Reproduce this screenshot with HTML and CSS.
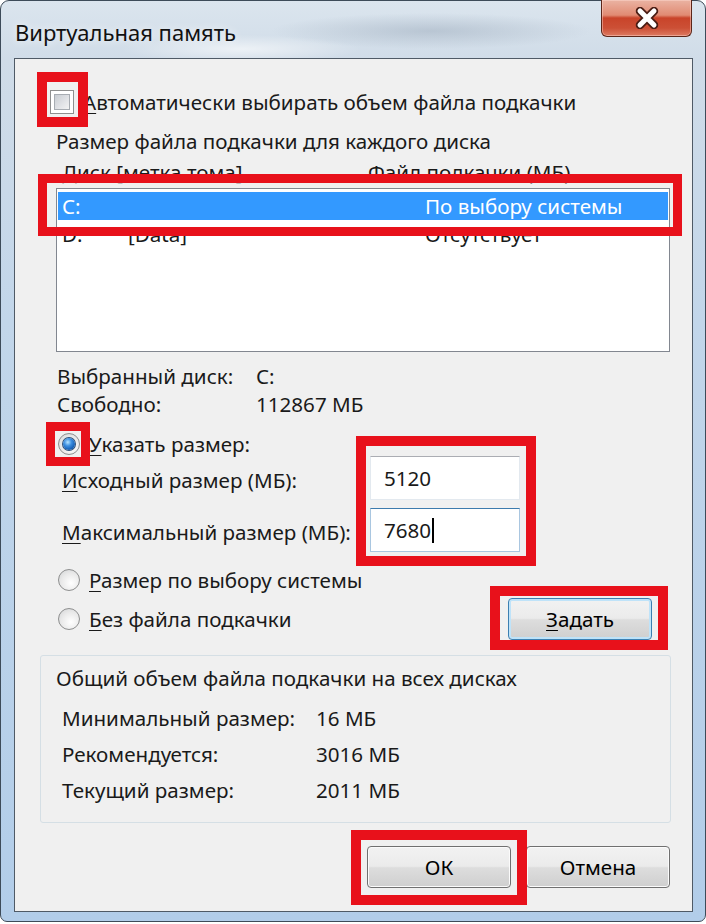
FILE: index.html
```html
<!DOCTYPE html>
<html lang="ru">
<head>
  <meta charset="UTF-8" />
  <title>Виртуальная память</title>
  <link rel="stylesheet" href="styles.css">
</head>
<body>
  <div class="window">
    <div class="titlebar">
      <span class="title">Виртуальная память</span>
      <button class="close-btn" aria-label="Закрыть">
        <svg width="28" height="22" viewBox="0 0 28 22">
          <path d="M7 4 L21 18 M21 4 L7 18" stroke="#4a1d14" stroke-width="8.5" stroke-linecap="round"/>
          <path d="M7 4 L21 18 M21 4 L7 18" stroke="#fff" stroke-width="5" stroke-linecap="round"/>
        </svg>
      </button>
    </div>

    <div class="client">
      <!-- auto checkbox -->
      <label class="auto-row">
        <span class="checkbox"></span>
        <span><u>А</u>втоматически выбирать объем файла подкачки</span>
      </label>

      <div class="section-caption">Размер файла подкачки для каждого диска</div>
      <div class="list-head">
        <span>Диск [метка тома]</span>
        <span>Файл подкачки (МБ)</span>
      </div>
      <div class="listbox">
        <div class="list-row selected"><span>C:</span><span></span><span>По выбору системы</span></div>
        <div class="list-row"><span>D:</span><span>[Data]</span><span>Отсутствует</span></div>
      </div>

      <div class="info-row first"><span>Выбранный диск:</span><span>C:</span></div>
      <div class="info-row"><span>Свободно:</span><span>112867 МБ</span></div>

      <label class="radio-row custom">
        <span class="radio checked"></span>
        <span><u>У</u>казать размер:</span>
      </label>
      <div class="size-row">
        <span class="size-label"><u>И</u>сходный размер (МБ):</span>
        <div class="field">5120</div>
      </div>
      <div class="size-row second">
        <span class="size-label"><u>М</u>аксимальный размер (МБ):</span>
        <div class="field focused">7680<span class="caret"></span></div>
      </div>

      <label class="radio-row system">
        <span class="radio"></span>
        <span><u>Р</u>азмер по выбору системы</span>
      </label>
      <div class="none-row">
        <label class="radio-row">
          <span class="radio"></span>
          <span><u>Б</u>ез файла подкачки</span>
        </label>
        <button class="btn default"><u>З</u>адать</button>
      </div>

      <div class="totals">
        <div class="totals-caption">Общий объем файла подкачки на всех дисках</div>
        <div class="total-row first"><span>Минимальный размер:</span><span>16 МБ</span></div>
        <div class="total-row"><span>Рекомендуется:</span><span>3016 МБ</span></div>
        <div class="total-row"><span>Текущий размер:</span><span>2011 МБ</span></div>
      </div>

      <div class="dialog-buttons">
        <button class="btn">ОК</button>
        <button class="btn">Отмена</button>
      </div>

      <!-- red annotation frames -->
      <div class="mark mark-auto"></div>
      <div class="mark mark-list"></div>
      <div class="mark mark-radio"></div>
      <div class="mark mark-fields"></div>
      <div class="mark mark-set"></div>
      <div class="mark mark-ok"></div>
    </div>
  </div>
</body>
</html>
```

FILE: styles.css
```css
:root {
  --text: #1a1a1a;
  --red: #e8111b;
  --client-bg: #f0f0f0;
  --btn-border: #707070;
}

* {
  box-sizing: border-box;
}

html, body {
  margin: 0;
  padding: 0;
  height: 100%;
}

body {
  background: #fff;
  font-family: "Noto Sans", "Open Sans", sans-serif;
  font-size: 20.6px;
  color: var(--text);
}

u {
  text-decoration-thickness: 1px;
  text-underline-offset: 3px;
}

/* window frame */
.window {
  width: 706px;
  height: 922px;
  border: 1px solid #3d4b59;
  border-radius: 9px 9px 7px 7px;
  padding: 0 12px 9px 13px;
  display: flex;
  flex-direction: column;
  background:
    radial-gradient(ellipse 160px 18px at 430px 30px, rgba(150, 165, 182, 0.45), transparent),
    radial-gradient(ellipse 120px 14px at 240px 48px, rgba(255, 255, 255, 0.6), transparent),
    linear-gradient(180deg, #dbe5ee 0, #d0dce8 58px, #c2d6ea 320px, #b2cde9 100%);
}

.titlebar {
  height: 57px;
  display: flex;
  align-items: flex-start;
}

.title {
  padding: 16px 0 0 1px;
  line-height: 30px;
  font-size: 22px;
  color: #111;
  text-shadow: 0 0 8px rgba(255, 255, 255, 0.9);
}

.close-btn {
  margin: -1px 1px 0 auto;
  width: 91px;
  height: 37px;
  padding: 0;
  border: 1px solid #5c2619;
  border-top: none;
  border-radius: 0 0 6px 6px;
  display: flex;
  align-items: center;
  justify-content: center;
  background: linear-gradient(180deg, #eab3a3 0%, #e18b73 42%, #c9442a 50%, #cc5036 78%, #dd7a62 100%);
  box-shadow: inset 0 0 0 1px rgba(255, 220, 210, 0.45);
}

/* client area */
.client {
  position: relative;
  flex: 1;
  border: 1px solid #4f5a66;
  background: var(--client-bg);
}

.auto-row {
  display: flex;
  align-items: center;
  height: 26px;
  margin: 30px 0 0 35px;
}

.checkbox {
  width: 24px;
  height: 24px;
  margin-right: 9px;
  border: 1px solid #8e8f8f;
  background: #fff;
  padding: 3px;
  display: flex;
}

.checkbox::before {
  content: "";
  flex: 1;
  border: 1px solid #a7acb2;
  background: linear-gradient(135deg, #c8ccd2 0%, #e2e4e7 60%, #f3f3f3 100%);
}

.section-caption {
  margin: 13px 0 0 41px;
  line-height: 26px;
}

.list-head {
  display: grid;
  grid-template-columns: 306px auto;
  margin: 5px 0 0 47px;
  line-height: 26px;
}

.listbox {
  margin: 3px 0 0 41px;
  width: 614px;
  height: 164px;
  border: 1px solid #828790;
  background: #fff;
  padding: 3px 1px 0;
}

.list-row {
  display: grid;
  grid-template-columns: 66px 297px auto;
  height: 28px;
  line-height: 28px;
  padding-left: 4px;
}

.list-row.selected {
  background: #3399ff;
  color: #fff;
}

.info-row {
  display: grid;
  grid-template-columns: 199px auto;
  margin-left: 42px;
  line-height: 28px;
}

.info-row.first {
  margin-top: 10px;
}

.radio-row {
  display: flex;
  align-items: center;
  height: 26px;
  margin-left: 43px;
}

.radio-row.custom {
  margin-top: 13px;
  height: 25px;
}

.radio-row.system {
  margin-top: 15px;
}

.radio {
  width: 22px;
  height: 22px;
  margin-right: 9px;
  border-radius: 50%;
  border: 1px solid #8e8f8f;
  background: radial-gradient(circle at 60% 65%, #ffffff 0%, #e9e9e9 55%, #cfd1d3 100%);
  display: flex;
  align-items: center;
  justify-content: center;
}

.radio.checked::before {
  content: "";
  width: 12px;
  height: 12px;
  border-radius: 50%;
  background: radial-gradient(circle at 40% 35%, #b6e4ff 0%, #3d8fe0 35%, #155fb5 70%, #0c3a72 100%);
  box-shadow: 0 0 0 1px #2b4f78;
}

.size-row {
  display: flex;
  align-items: center;
  height: 44px;
  margin-left: 47px;
}

.size-row.second {
  margin-top: 8px;
}

.size-label {
  width: 308px;
  padding-top: 3px;
}

.field {
  width: 150px;
  height: 44px;
  padding-left: 13px;
  line-height: 42px;
  background: #fff;
  border: 1px solid #e3e9ef;
  border-top-color: #abadb3;
  display: flex;
  align-items: center;
}

.field.focused {
  border-color: #a9c6e0;
  border-top-color: #3d7bad;
}

.caret {
  width: 1.5px;
  height: 25px;
  margin-left: 1px;
  background: #000;
}

.none-row {
  display: flex;
  align-items: center;
  justify-content: space-between;
  height: 42px;
  width: 637px;
  margin-top: 5px;
}

.none-row .radio-row {
  height: 26px;
}

/* buttons */
.btn {
  width: 144px;
  height: 42px;
  padding: 0;
  font: inherit;
  color: #000;
  border: 1px solid var(--btn-border);
  border-radius: 4px;
  background: linear-gradient(180deg, #f2f2f2 0%, #ebebeb 48%, #dddddd 52%, #cfcfcf 100%);
  box-shadow: inset 0 0 0 1px #fbfbfb;
}

.btn.default {
  border-color: #3c7fb1;
  box-shadow: inset 0 0 0 2px #bfe3f9;
}

.totals {
  margin: 15px 0 0 25px;
  width: 631px;
  height: 168px;
  border: 1px solid #d5dfe5;
  border-radius: 3px;
  padding: 9px 0 0 15px;
}

.totals-caption {
  line-height: 26px;
}

.total-row {
  display: grid;
  grid-template-columns: 254px auto;
  margin-left: 6px;
  line-height: 36px;
}

.total-row.first {
  margin-top: 9px;
}

.dialog-buttons {
  display: flex;
  justify-content: flex-end;
  gap: 15px;
  margin-top: 23px;
  padding-right: 22px;
}

/* red annotation frames drawn over the dialog */
.mark {
  position: absolute;
  border: 10px solid var(--red);
  pointer-events: none;
}

.mark-auto   { left: 22px;  top: 13px;  width: 51px;  height: 55px; }
.mark-list   { left: 23px;  top: 115px; width: 644px; height: 62px; border-width: 9px; }
.mark-radio  { left: 31px;  top: 363px; width: 44px;  height: 44px; border-width: 9px; }
.mark-fields { left: 341px; top: 377px; width: 180px; height: 130px; }
.mark-set    { left: 475px; top: 527px; width: 178px; height: 64px; }
.mark-ok     { left: 336px; top: 771px; width: 176px; height: 75px; }
```
